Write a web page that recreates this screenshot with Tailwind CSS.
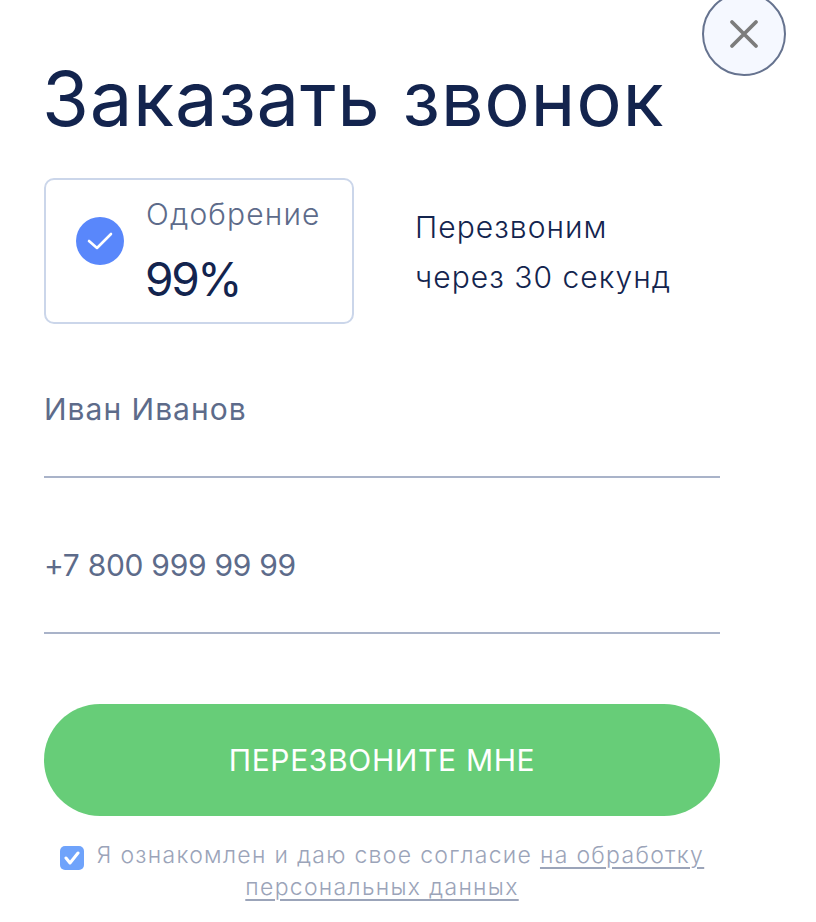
<!DOCTYPE html>
<html lang="ru">
  <head>
    <meta charset="UTF-8" />
    <script src="https://cdn.jsdelivr.net/npm/@tailwindcss/browser@4"></script>
    <title>Заказать звонок</title>
  </head>
  <body class="bg-white font-['Inter','Noto_Sans',sans-serif]">
    <div class="relative w-[816px] h-[922px] overflow-hidden pl-[44px]">
      <!-- close -->
      <button class="absolute left-[702px] top-[-8px] w-[84px] h-[84px] rounded-full border-2 border-[#66738f] bg-[#f5f8ff] flex items-center justify-center">
        <svg width="30" height="30" viewBox="0 0 30 30" fill="none" stroke="#7c7c7c" stroke-width="3.8" stroke-linecap="round"><path d="M3 3l24 24M27 3L3 27" /></svg>
      </button>

      <h1 class="pt-[52px] h-[178px] -ml-[2px] text-[76px] leading-[92px] tracking-[0.7px] text-[#13244e] font-normal whitespace-nowrap">Заказать звонок</h1>

      <div class="flex items-center">
        <div class="w-[310px] h-[146px] rounded-[10px] border-2 border-[#cbd6ea] flex items-center pl-[30px]">
          <div class="w-[48px] h-[48px] mb-[20px] rounded-full bg-[#5987fb] flex items-center justify-center">
            <svg width="26" height="20" viewBox="0 0 26 20" fill="none" stroke="#fff" stroke-width="2.6" stroke-linecap="round" stroke-linejoin="round"><path d="M2 10l8 7L24 3" /></svg>
          </div>
          <div class="ml-[22px]">
            <div class="text-[30px] leading-[38px] -mt-[2px] tracking-[1.15px] text-[#5d6b8a] font-light">Одобрение</div>
            <div class="text-[46px] leading-[52px] -ml-[1px] tracking-[-2.4px] text-[#13244e] mt-[20px]">99%</div>
          </div>
        </div>
        <div class="ml-[61px] mt-[2px] text-[30px] leading-[50px] tracking-[1.05px] text-[#13244e] font-light">
          <div>Перезвоним</div>
          <div>через 30 секунд</div>
        </div>
      </div>

      <div class="w-[676px] mt-[64px] h-[90px] border-b-2 border-[#a9b3c9] text-[30px] leading-[42px] tracking-[1px] text-[#5d6b8a]">Иван Иванов</div>
      <div class="w-[676px] mt-[64px] h-[92px] pt-[2px] border-b-2 border-[#a9b3c9] text-[30px] leading-[42px] tracking-[-0.3px] text-[#5d6b8a]">+7 800 999 99 99</div>

      <button class="block w-[676px] h-[112px] mt-[70px] rounded-[56px] bg-[#67cd78] text-white text-[30px] tracking-[0.65px]">ПЕРЕЗВОНИТЕ МНЕ</button>

      <div class="w-[676px] mt-[23px] text-center text-[23px] leading-[32px] tracking-[1.3px] text-[#9ba4b9] font-light">
        <div class="flex items-center justify-center">
          <span class="relative w-[24px] h-[24px] rounded-[5px] bg-[#6fa3fb] mr-[13px] mt-[6px]">
            <svg class="absolute left-[4px] top-[5px]" width="16" height="14" viewBox="0 0 16 14" fill="none" stroke="#fff" stroke-width="3" stroke-linecap="round" stroke-linejoin="round"><path d="M2 7l4 5 8-10" /></svg>
          </span>
          <span class="whitespace-pre">Я ознакомлен и даю свое согласие <a class="underline decoration-[1.5px] underline-offset-4">на обработку</a></span>
        </div>
        <div><a class="underline decoration-[1.5px] underline-offset-4">персональных данных</a></div>
      </div>
    </div>
  </body>
</html>
